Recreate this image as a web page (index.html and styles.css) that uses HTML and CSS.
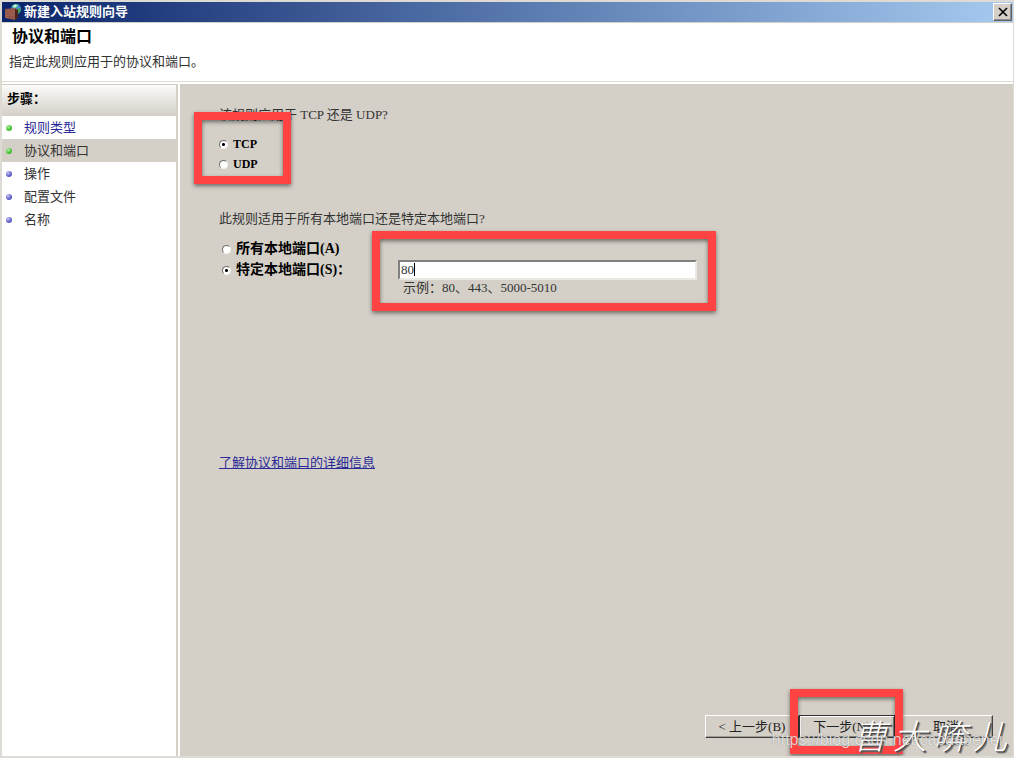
FILE: index.html
```
<!DOCTYPE html>
<html lang="zh-CN">
<head>
    <meta charset="UTF-8">
    <meta name="viewport" content="width=device-width, initial-scale=1.0">
    <title>新建入站规则向导</title>
    <link rel="stylesheet" href="styles.css">
</head>
<body>
    <div class="window">
        <div class="titlebar">
            <svg class="app-icon" viewBox="0 0 18 18" width="18" height="18">
                <circle cx="12" cy="6" r="5" fill="#3f8fd0"/>
                <path d="M8 3 Q11 0 14 2 Q13 5 10 5 Z" fill="#8be08f"/>
                <path d="M13 6 L17 5 Q17 9 14 11 Z" fill="#3fa35a"/>
                <circle cx="11" cy="3" r="1" fill="#dff6ff"/>
                <path d="M1 6 L11 5 L14 7 L14 14 L11 17 L1 15 Z" fill="#95564a"/>
                <path d="M11 6 L14 7 L14 14 L11 17 Z" fill="#4d241c"/>
                <path d="M1 9 H11 M1 12 H11 M5 6 V9 M8 9 V12 M4 12 V15" stroke="#a8705f" stroke-width="0.5" fill="none"/>
            </svg>
            <span class="title">新建入站规则向导</span>
            <button class="close-btn" aria-label="关闭">
                <svg viewBox="0 0 12 10" width="12" height="10">
                    <path d="M2 1 L10 9 M10 1 L2 9" stroke="#000" stroke-width="1.6" fill="none"/>
                </svg>
            </button>
        </div>

        <div class="header">
            <h1>协议和端口</h1>
            <p>指定此规则应用于的协议和端口。</p>
        </div>

        <div class="body">
            <div class="sidebar">
                <h2>步骤：</h2>
                <ul class="steps">
                    <li class="done"><a href="#">规则类型</a></li>
                    <li class="done current">协议和端口</li>
                    <li>操作</li>
                    <li>配置文件</li>
                    <li>名称</li>
                </ul>
            </div>

            <form class="content">
                <p class="question">该规则应用于 TCP 还是 UDP?</p>
                <div class="protocol">
                    <label><input type="radio" name="protocol" checked>TCP</label>
                    <label><input type="radio" name="protocol">UDP</label>
                    <div class="mark mark-protocol"></div>
                </div>

                <p class="question question-ports">此规则适用于所有本地端口还是特定本地端口?</p>
                <div class="ports">
                    <label><input type="radio" name="ports">所有本地端口(A)</label>
                    <label><input type="radio" name="ports" checked>特定本地端口(S)：</label>
                    <div class="port-field">
                        <input type="text" class="port-input" value="80" aria-label="特定本地端口">
                        <span class="caret"></span>
                        <div class="mark mark-ports"></div>
                    </div>
                    <p class="hint">示例：80、443、5000-5010</p>
                </div>

                <a class="more" href="#">了解协议和端口的详细信息</a>

                <div class="buttons">
                    <button type="button">&lt; 上一步(B)</button>
                    <div class="next-wrap">
                        <button type="button" class="default">下一步(N) &gt;</button>
                        <div class="mark mark-next"></div>
                    </div>
                    <button type="button" class="cancel">取消</button>
                </div>
            </form>
        </div>

        <div class="watermark-name">
            <span>曹</span><span>大</span><span>喯</span><span>儿</span>
        </div>
        <div class="watermark-url">https://blog.csdn.net/caodabener</div>
    </div>
</body>
</html>
```

FILE: styles.css
```
* {
    box-sizing: border-box;
}
body {
    margin: 0;
    font-family: "Liberation Serif", "Noto Sans CJK SC", serif;
    font-size: 13px;
    line-height: 20px;
    color: #333;
}
h1, h2, p, ul {
    margin: 0;
    padding: 0;
}
.window {
    position: relative;
    display: flex;
    flex-direction: column;
    min-height: 100vh;
    border: 2px solid #dedad4;
    border-right-width: 1px;
    background: #fff;
    overflow: hidden;
}
.titlebar {
    display: flex;
    align-items: center;
    height: 20px;
    padding: 0 1px 0 2px;
    background: linear-gradient(to right, #0a246a, #a6caf0);
    color: #fff;
}
.title {
    flex: 1;
    margin-left: 2px;
    font-weight: bold;
}
.close-btn {
    display: flex;
    align-items: center;
    justify-content: center;
    width: 19px;
    height: 18px;
    padding: 0;
    background: #d4d0c8;
    border: 1px solid;
    border-color: #fff #606060 #606060 #fff;
    box-shadow: inset -1px -1px 0 #909090;
}
.header {
    height: 60px;
    padding: 4px 7px 0;
    border-top: 1px solid #d4d0c8;
    border-bottom: 1px solid #dedad4;
}
.header h1 {
    padding-left: 3px;
    font-size: 16px;
    color: #000;
}
.header p {
    margin-top: 5px;
}
.body {
    display: flex;
    flex: 1;
    margin-top: 2px;
}
.sidebar {
    width: 176px;
    border-top: 1px solid #d4d0c8;
    border-right: 2px solid #d4d0c8;
    margin-right: 2px;
}
.sidebar h2 {
    height: 31px;
    padding: 4px 5px;
    font-size: 13px;
    color: #000;
    background: linear-gradient(#fbfbfa, #d4d0c8);
}
.steps {
    list-style: none;
}
.steps li {
    display: flex;
    align-items: center;
    height: 23px;
    padding-left: 4px;
}
.steps li::before {
    content: "";
    width: 6px;
    height: 6px;
    margin-right: 12px;
    border-radius: 50%;
    background: radial-gradient(circle at 35% 30%, #c8c8f4, #5a5ac8 60%);
}
.steps li.done::before {
    background: radial-gradient(circle at 35% 30%, #b8f0a8, #3fbc30 60%);
}
.steps li.current {
    background: #d4d0c8;
}
.steps a, .more {
    color: #2a2a96;
}
.steps a {
    text-decoration: none;
}
.content {
    display: flex;
    flex: 1;
    flex-direction: column;
    padding: 21px 20px 18px 39px;
    background: #d4d0c8;
}
.protocol {
    position: relative;
    margin-top: 9px;
}
.protocol label, .ports label {
    display: flex;
    align-items: center;
    font-weight: bold;
    color: #000;
}
.protocol label {
    font-size: 12px;
}
input[type="radio"] {
    appearance: none;
    width: 9px;
    height: 9px;
    margin: 0 5px 0 0;
    border: 1px solid;
    border-color: #707070 #f4f2ee #f4f2ee #707070;
    border-radius: 50%;
    background: #fff;
}
input[type="radio"]:checked {
    background: radial-gradient(circle, #000 1px, #fff 2px);
}
.question-ports {
    margin-top: 35px;
}
.ports {
    display: grid;
    grid-template-columns: 176px minmax(0, 299px);
    row-gap: 1px;
    margin: 10px 0 0 3px;
}
.ports label {
    grid-column: 1;
    font-size: 14px;
}
.port-field {
    position: relative;
    grid-column: 2;
    height: 20px;
}
.port-input {
    display: block;
    width: 100%;
    height: 20px;
    padding: 0 1px;
    border: 2px solid;
    border-color: #808080 #ece9e4 #ece9e4 #808080;
    outline: none;
    background: #fff;
    font: inherit;
    color: #333;
}
.caret {
    position: absolute;
    left: 16px;
    top: 3px;
    width: 1px;
    height: 13px;
    background: #000;
}
.hint {
    grid-column: 2;
    margin-top: -3px;
    padding-left: 5px;
}
.more {
    align-self: flex-start;
    margin-top: 155px;
}
.buttons {
    display: flex;
    justify-content: flex-end;
    margin-top: auto;
}
.buttons button {
    width: 94px;
    height: 23px;
    padding: 0;
    border: 1px solid;
    border-color: #fff #404040 #404040 #fff;
    box-shadow: inset -1px -1px 0 #a09c94;
    background: #d4d0c8;
    font: inherit;
    color: #222;
}
.next-wrap {
    position: relative;
}
.buttons .default {
    width: 96px;
    border-color: #333;
    box-shadow: inset 1px 1px 0 #fff, inset -1px -1px 0 #808080;
}
.buttons .cancel {
    margin-left: 4px;
}

/* red highlight frames */
.mark {
    position: absolute;
    border: 8px solid #ff4343;
    filter: drop-shadow(0 2px 2px rgba(0, 0, 0, 0.5));
    pointer-events: none;
}
.mark-protocol {
    left: -25px;
    top: -22px;
    width: 97px;
    height: 72px;
}
.mark-ports {
    left: -26px;
    top: -29px;
    right: -19px;
    height: 80px;
}
.mark-next {
    left: -9px;
    top: -26px;
    right: -8px;
    height: 65px;
}

.watermark-name {
    position: absolute;
    right: 6px;
    bottom: -2px;
    display: flex;
    gap: 6px;
    font-size: 34px;
    font-weight: 300;
    font-style: italic;
    line-height: 40px;
    color: #fff;
    text-shadow: 1px 1px 0 #444, 2px 2px 1px #666;
}
.watermark-url {
    position: absolute;
    right: 9px;
    bottom: 6px;
    font-family: "Liberation Sans", Arial, sans-serif;
    font-size: 16px;
    color: rgba(255, 255, 255, 0.75);
    text-shadow: 0 0 1px rgba(0, 0, 0, 0.4);
}
```
